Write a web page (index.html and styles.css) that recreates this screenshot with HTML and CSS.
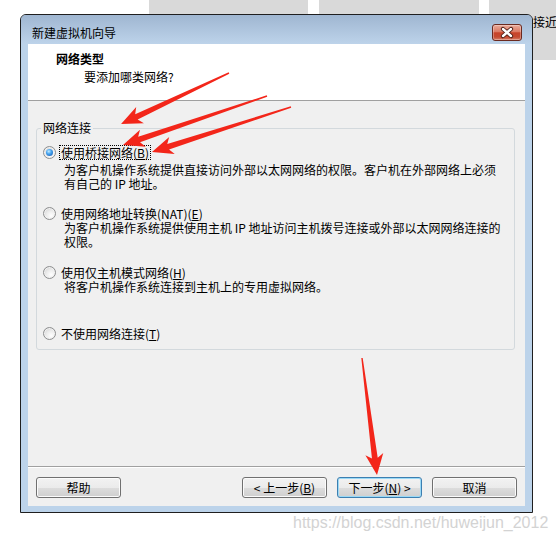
FILE: index.html
```html
<!DOCTYPE html>
<html lang="zh-CN">
<head>
<meta charset="utf-8">
<title>新建虚拟机向导</title>
<link rel="stylesheet" href="styles.css">
</head>
<body>
<div class="desk">
  <div class="bg-strip">
    <div class="bg-tab bg-tab--a"></div>
    <div class="bg-tab bg-tab--b"></div>
    <div class="bg-tab bg-tab--c">接近</div>
  </div>

  <div class="window">
    <div class="titlebar">
      <span class="title">新建虚拟机向导</span>
      <span class="close">
        <svg width="28" height="15" viewBox="0 0 28 15">
          <path d="M10 4 L18 11 M18 4 L10 11" stroke="#4b1a12" stroke-width="4.2" stroke-linecap="round" fill="none"/>
          <path d="M10 4 L18 11 M18 4 L10 11" stroke="#ffffff" stroke-width="2.4" stroke-linecap="round" fill="none"/>
        </svg>
      </span>
    </div>
    <div class="client">
      <div class="header">
        <div class="h-title">网络类型</div>
        <div class="h-sub">要添加哪类网络?</div>
      </div>
      <div class="content">
        <fieldset class="group">
          <legend class="legend">网络连接</legend>
          <div class="opt opt--1">
            <div class="opt-row"><span class="radio radio--on"></span><span class="label label--focus">使用桥接网络(<u>B</u>)</span></div>
            <div class="desc">为客户机操作系统提供直接访问外部以太网网络的权限。客户机在外部网络上必须<br>有自己的 IP 地址。</div>
          </div>
          <div class="opt opt--2">
            <div class="opt-row"><span class="radio"></span><span class="label">使用网络地址转换(NAT)(<u>E</u>)</span></div>
            <div class="desc">为客户机操作系统提供使用主机 IP 地址访问主机拨号连接或外部以太网网络连接的<br>权限。</div>
          </div>
          <div class="opt opt--3">
            <div class="opt-row"><span class="radio"></span><span class="label">使用仅主机模式网络(<u>H</u>)</span></div>
            <div class="desc">将客户机操作系统连接到主机上的专用虚拟网络。</div>
          </div>
          <div class="opt opt--4">
            <div class="opt-row"><span class="radio"></span><span class="label">不使用网络连接(<u>T</u>)</span></div>
          </div>
        </fieldset>
      </div>
      <div class="sep"></div>
      <div class="buttons">
        <span class="btn btn--help">帮助</span>
        <span class="btn">&lt; 上一步(<u>B</u>)</span>
        <span class="btn btn--default">下一步(<u>N</u>) &gt;</span>
        <span class="btn">取消</span>
      </div>
    </div>
  </div>

  <svg class="arrows" width="556" height="541" viewBox="0 0 556 541">
    <g fill="#f3261a">
      <path transform="translate(229 73) rotate(154.7)" d="M0,-0.7 L102.4,-2.9 L98.4,-9 L119.4,0 L98.4,9 L102.4,2.9 L0,0.7 Z"/>
      <path transform="translate(267 96) rotate(161.2)" d="M0,-0.7 L135.1,-2.9 L131.1,-9 L152.1,0 L131.1,9 L135.1,2.9 L0,0.7 Z"/>
      <path transform="translate(291 107) rotate(162.1)" d="M0,-0.7 L129.1,-2.9 L125.1,-9 L146.1,0 L125.1,9 L129.1,2.9 L0,0.7 Z"/>
      <path transform="translate(362 358) rotate(82.7)" d="M0,-0.7 L101,-2.9 L97,-9 L118,0 L97,9 L101,2.9 L0,0.7 Z"/>
    </g>
  </svg>

  <div class="watermark">https://blog.csdn.net/huweijun_2012</div>
</div>
</body>
</html>
```

FILE: styles.css
```css
* { box-sizing: border-box; }

html, body {
  margin: 0;
  padding: 0;
}

body {
  width: 556px;
  height: 541px;
  overflow: hidden;
  background: #ffffff;
  font-family: "Noto Sans CJK SC", "Liberation Sans", sans-serif;
  font-size: 12px;
  color: #000000;
}

.desk {
  position: relative;
  width: 556px;
  height: 541px;
  overflow: hidden;
}

/* background page behind the dialog */
.bg-strip {
  display: flex;
  padding-left: 149px;
}

.bg-tab {
  height: 60px;
  background: #d9d9d9;
}

.bg-tab--a { width: 159px; }
.bg-tab--b { width: 160px; margin-left: 11px; }
.bg-tab--c {
  flex: 1;
  margin-left: 10px;
  padding: 15px 0 0 44px;
  line-height: 14px;
  white-space: nowrap;
  overflow: hidden;
}

/* dialog window */
.window {
  position: absolute;
  left: 20px;
  top: 14px;
  width: 513px;
  height: 499px;
  border: 1px solid #1f1f1f;
  border-radius: 6px 6px 0 0;
  background: #bcd3ea;
  display: flex;
  flex-direction: column;
  padding: 0 7px 6px;
}

.titlebar {
  height: 29px;
  margin: 0 -7px;
  display: flex;
  justify-content: space-between;
  align-items: flex-start;
  background: linear-gradient(#9fb6d1, #bdd3ea);
  border-radius: 5px 5px 0 0;
}

.title {
  padding: 11px 0 0 11px;
  line-height: 14px;
}

.close {
  margin: 9px 10px 0 0;
  width: 30px;
  height: 17px;
  border: 1px solid #6b2a20;
  border-radius: 3px;
  background: linear-gradient(#e9ab9b 0%, #db7a64 45%, #c8432a 52%, #c44a31 80%, #d9806a 100%);
  box-shadow: inset 0 0 0 1px rgba(255, 255, 255, 0.3);
  display: flex;
}

.close svg { display: block; }

.client {
  flex: 1;
  display: flex;
  flex-direction: column;
  background: #f0f0f0;
}

.header {
  height: 57px;
  background: #ffffff;
  border-bottom: 1px solid #a0a0a0;
  padding: 7px 0 0 28px;
}

.h-title {
  font-weight: bold;
  line-height: 16px;
}

.h-sub {
  margin: 3px 0 0 28px;
  line-height: 14px;
}

.content {
  height: 365px;
  padding: 20px 10px 0 8px;
}

.group {
  margin: 0;
  padding: 9px 6px 8px 4px;
  border: 1px solid #d3d9dd;
  border-radius: 3px;
  min-width: 0;
}

.legend {
  padding: 0 2px;
  line-height: 14px;
}

.opt { margin-left: 2px; }
.opt--2 { margin-top: 14px; }
.opt--3 { margin-top: 15px; }
.opt--4 { margin-top: 31px; }

.opt-row {
  display: flex;
  align-items: center;
  height: 16px;
}

.radio {
  flex: none;
  width: 13px;
  height: 13px;
  border-radius: 50%;
  border: 1px solid #8d8e8f;
  background: radial-gradient(circle at 65% 70%, #ffffff 0%, #ececec 45%, #c9c9c9 100%);
  box-shadow: inset 0 0 0 1px #f2f2f2;
  display: grid;
  place-items: center;
}

.radio--on::after {
  content: "";
  width: 7px;
  height: 7px;
  border-radius: 50%;
  background: radial-gradient(circle at 40% 35%, #c4ecff 0%, #47a4ef 40%, #0f4ea6 100%);
}

.label {
  margin-left: 3px;
  padding: 0 1px;
  border: 1px dotted transparent;
  line-height: 13px;
  white-space: nowrap;
}

.label--focus { border-color: #000000; }

.desc {
  margin-left: 21px;
  line-height: 14px;
  white-space: nowrap;
}

.opt--1 .desc { margin-top: 3px; }

.sep {
  height: 2px;
  border-top: 1px solid #a0a0a0;
  background: #ffffff;
}

.buttons {
  height: 38px;
  padding: 9px 8px 8px;
  display: flex;
}

.btn {
  width: 85px;
  height: 21px;
  border: 1px solid #707070;
  border-radius: 3px;
  background: linear-gradient(#f2f2f2 0%, #ebebeb 50%, #dddddd 51%, #cfcfcf 100%);
  box-shadow: inset 0 0 0 1px #fbfbfb;
  display: flex;
  align-items: center;
  justify-content: center;
  line-height: 14px;
  white-space: nowrap;
}

.btn + .btn { margin-left: 10px; }
.btn--help { margin-right: auto; }

.btn--default {
  border-color: #3c7fb1;
  box-shadow: inset 0 0 0 1px #9ad9f6;
}

/* annotation overlay */
.arrows {
  position: absolute;
  left: 0;
  top: 0;
  pointer-events: none;
}

.watermark {
  position: absolute;
  left: 293px;
  top: 513px;
  font-family: "Liberation Sans", Arial, sans-serif;
  font-size: 16px;
  line-height: 20px;
  color: #d3d3d3;
  white-space: nowrap;
}
```
